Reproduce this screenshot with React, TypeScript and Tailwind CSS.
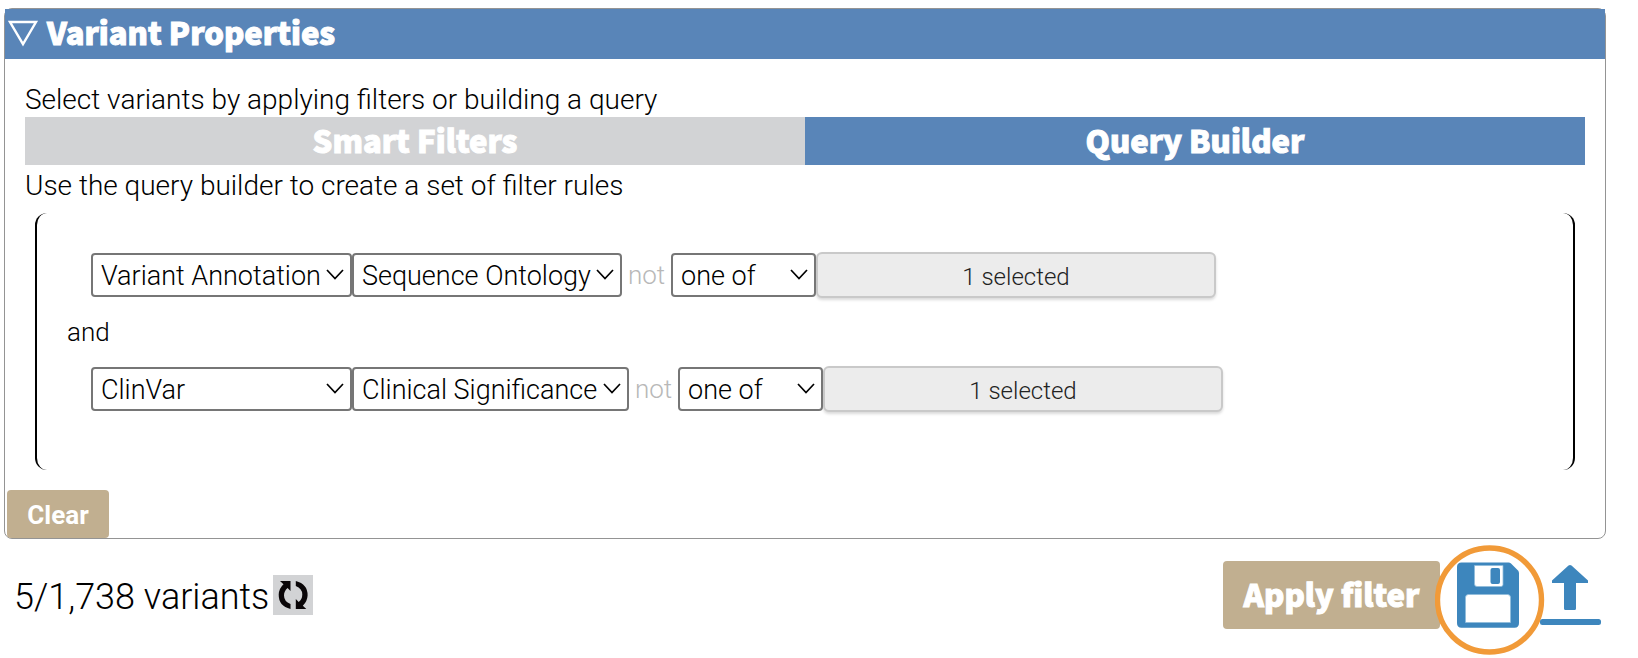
import { useState } from "react";

const heading =
  "font-['Noto_Sans_CJK_SC','Open_Sans',sans-serif] font-black text-[31px] leading-[46px] text-white [-webkit-text-stroke:1px_white]";

function Chevron() {
  return (
    <svg
      viewBox="0 0 18 11"
      className="pointer-events-none absolute top-4 right-2 h-[11px] w-[18px]"
      fill="none"
      stroke="#000"
      strokeWidth="1.7"
      aria-hidden="true"
    >
      <path d="M1 1 L9 9.5 L17 1" />
    </svg>
  );
}

type PickerProps = { name: string; value: string; options: string[]; width: string };

function Picker({ name, value, options, width }: PickerProps) {
  return (
    <div className={`relative shrink-0 ${width}`}>
      <select
        aria-label={name}
        defaultValue={value}
        className="block h-11 w-full appearance-none rounded border-2 border-[#767676] bg-white pt-0.5 pl-2 text-[27px] leading-8 text-black"
      >
        {options.map((o) => (
          <option key={o}>{o}</option>
        ))}
      </select>
      <Chevron />
    </div>
  );
}

const sources = ["Variant Annotation", "ClinVar"];
const operators = ["one of", "has data", "is empty"];

function Rule({ source, field, fieldWidth }: { source: string; field: string; fieldWidth: string }) {
  const [negated, setNegated] = useState(false);
  return (
    <div className="flex h-[46px] items-center pl-6">
      <Picker name="Source" value={source} options={sources} width="w-[261px]" />
      <Picker name="Field" value={field} options={[field]} width={fieldWidth} />
      <button
        type="button"
        aria-pressed={negated}
        onClick={() => setNegated(!negated)}
        className={`w-[49px] text-[26px] leading-8 font-light ${negated ? "text-black" : "text-[#b8b8b8]"}`}
      >
        not
      </button>
      <Picker name="Operator" value="one of" options={operators} width="w-[145px]" />
      <button
        type="button"
        className="h-[46px] w-[400px] rounded-md border-2 border-[#c9c9c9] bg-[#ececec] pt-1 text-[24px] leading-8 font-light text-[#222] shadow-[0_2px_3px_rgba(0,0,0,0.15)]"
      >
        1 selected
      </button>
    </div>
  );
}

function RefreshIcon() {
  return (
    <svg viewBox="0 0 40 40" className="h-10 w-10" fill="#0a0608" aria-hidden="true">
      <path d="M7 6 H17.5 V16 L14.6 13 Q11 16 11 20.5 Q11 26.5 17.5 29 V34 Q5.5 31 5.7 19.5 Q6 13.5 10.5 9.3 Z" />
      <path d="M33.3 34 H22.8 V24 L25.7 27 Q29.3 24 29.3 19.5 Q29.3 13.5 22.8 11 V6 Q34.8 9 34.6 20.5 Q34.3 26.5 29.8 30.7 Z" />
    </svg>
  );
}

function SaveIcon() {
  return (
    <svg viewBox="0 0 110 110" className="h-[110px] w-[110px]" aria-hidden="true">
      <circle cx="54.5" cy="55" r="52" fill="none" stroke="#f19a38" strokeWidth="5.4" />
      <path
        d="M26.5 17.5 H73.5 Q75 17.5 76 18.5 L83 25.5 Q84 26.5 84 28.5 V78 Q84 82.7 79.5 82.7 H26.5 Q22 82.7 22 78 V22 Q22 17.5 26.5 17.5 Z"
        fill="#3d86bd"
      />
      <path d="M39.5 20.5 H68 V39.5 Q68 41.5 66 41.5 H42 Q39.5 41.5 39.5 39 Z" fill="#fff" stroke="#8fbbdb" strokeWidth="0.8" />
      <rect x="55.5" y="23" width="9.5" height="16" rx="2" fill="#3d86bd" />
      <path d="M33.5 49.5 H72.5 Q75.5 49.5 75.5 52.5 V77.5 H30.5 V52.5 Q30.5 49.5 33.5 49.5 Z" fill="#fff" stroke="#8fbbdb" strokeWidth="0.8" />
    </svg>
  );
}

function UploadIcon() {
  return (
    <svg viewBox="0 0 66 84" className="h-[84px] w-[66px]" fill="#3d86bd" aria-hidden="true">
      <path d="M28.5 20.5 Q30 19.5 31.5 20.5 L48 35.5 V38 H36 V63.5 Q36 65 34.5 65 H25.5 Q24 65 24 63.5 V38 H12 V35.5 Z" />
      <rect x="0" y="74" width="61" height="6" rx="2.5" />
    </svg>
  );
}

export default function App() {
  const [tab, setTab] = useState("query");
  return (
    <main className="bg-white pt-2 pr-8 pl-1 font-[Roboto,sans-serif] font-light text-black">
      <section className="rounded-lg border border-[#949494]">
        <button type="button" className="flex h-[50px] w-full items-start bg-[#5985b8] text-left">
          <svg viewBox="0 0 32 28" className="mt-[11px] ml-[3px] h-7 w-8" fill="none" stroke="#fff" strokeWidth="2.4" aria-hidden="true">
            <path d="M2 2 H28 L15 24.2 Z" />
          </svg>
          <span className={`${heading} ml-[7px]`}>Variant Properties</span>
        </button>
        <div className="px-5 pt-6">
          <p className="text-[28px] leading-[34px]">Select variants by applying filters or building a query</p>
          <div role="tablist" className={`${heading} grid grid-cols-2`}>
            <button
              type="button"
              role="tab"
              aria-selected={tab === "smart"}
              onClick={() => setTab("smart")}
              className="h-12 bg-[#d2d3d5] pb-0.5"
            >
              Smart Filters
            </button>
            <button
              type="button"
              role="tab"
              aria-selected={tab === "query"}
              onClick={() => setTab("query")}
              className="h-12 bg-[#5985b8] pb-0.5"
            >
              Query Builder
            </button>
          </div>
          <p className="pt-1 text-[28px] leading-[34px]">Use the query builder to create a set of filter rules</p>
          <div className="mx-2.5 mt-2.5 rounded-xl border-x-2 border-black pt-[39px] pb-[58px] pl-[30px]">
            <Rule source="Variant Annotation" field="Sequence Ontology" fieldWidth="w-[270px]" />
            <div className="flex h-[68px] items-center text-[26px]">and</div>
            <Rule source="ClinVar" field="Clinical Significance" fieldWidth="w-[277px]" />
          </div>
        </div>
        <button
          type="button"
          className="mt-5 ml-0.5 block h-12 w-[102px] rounded bg-[#c1af90] pt-0.5 text-[26px] leading-8 font-bold text-white"
        >
          Clear
        </button>
      </section>

      <footer className="flex items-start justify-between pt-1.5 pl-2.5">
        <div className="mt-[30px] flex items-start text-[36px] leading-[44px]">
          <span>5/1,738 variants</span>
          <button type="button" aria-label="Refresh" className="ml-1 h-10 w-10 bg-[#d2d3d5]">
            <RefreshIcon />
          </button>
        </div>
        <div className="flex items-start">
          <button type="button" className={`${heading} mt-4 h-[68px] w-[217px] rounded bg-[#c1af90] pb-0.5`}>
            Apply filter
          </button>
          <button type="button" aria-label="Save" className="-ml-[5px] h-[110px] w-[110px]">
            <SaveIcon />
          </button>
          <button type="button" aria-label="Upload" className="-ml-[5px] h-[84px] w-[66px]">
            <UploadIcon />
          </button>
        </div>
      </footer>
    </main>
  );
}
